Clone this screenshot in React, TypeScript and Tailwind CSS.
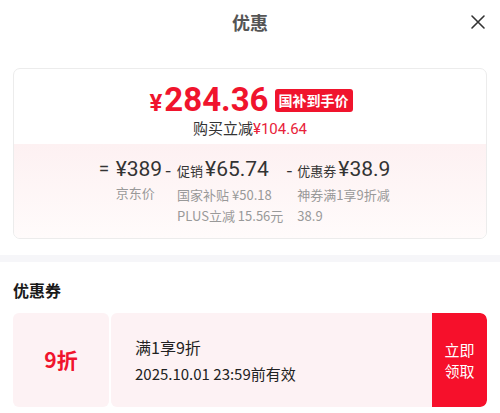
import React from "react";

const cjk = { fontFamily: '"Noto Sans CJK SC", "Noto Sans", sans-serif' };
const num = { fontFamily: 'Roboto, "Noto Sans CJK SC", sans-serif' };

export default function App() {
  return (
    <div className="w-[500px] h-[413px] bg-white overflow-hidden" style={cjk}>
      {/* header */}
      <div className="relative h-[44px] flex items-center justify-center">
        <span className="text-[18px] font-bold text-[#555555] leading-none">优惠</span>
        <svg className="absolute right-[14px] top-[14px]" width="16" height="16" viewBox="0 0 16 16">
          <path d="M2 2 L14 14 M14 2 L2 14" stroke="#333" strokeWidth="1.6" strokeLinecap="round" />
        </svg>
      </div>

      {/* price card */}
      <div className="mt-[24px] mx-[13px] border border-[#ececec] rounded-[7px] overflow-hidden h-[171px] flex flex-col">
        <div className="h-[75px] flex flex-col items-center pt-[13px]">
          <div className="flex items-center gap-[6px] h-[34px] ml-[2px]">
            <div className="flex items-baseline text-[#f0142d] font-bold leading-none" style={num}>
              <span className="text-[24px] mr-[2px]">¥</span>
              <span className="text-[33px]">284.36</span>
            </div>
            <span className="bg-[#f0142d] text-white text-[14px] font-bold rounded-[3px] px-[4px] h-[23px] leading-[23px] mt-[2px]">国补到手价</span>
          </div>
          <div className="mt-[2px] text-[15px] leading-[20px] text-[#333]">
            购买立减<span className="text-[#e8223a]" style={num}>¥104.64</span>
          </div>
        </div>
        <div className="flex-1 bg-gradient-to-b from-[#fdf1f2] to-[#fffbfb] flex justify-center pt-[12px] pr-[8px]">
          <div className="flex gap-[3px]">
            <div className="flex">
              <span className="w-[17px] text-[19px] leading-[26px] text-[#333]" style={num}>=</span>
              <div className="flex flex-col">
                <span className="text-[21px] leading-[26px] text-[#333]" style={num}>¥389</span>
                <span className="text-[13px] leading-[21px] text-[#999]">京东价</span>
              </div>
            </div>
            <div className="flex">
              <span className="w-[12px] text-[18px] leading-[26px] text-[#333]">-</span>
              <div className="flex flex-col">
                <span className="leading-[26px] text-[#333]">
                  <span className="text-[13px]">促销</span>
                  <span className="text-[21px] ml-[2px]" style={num}>¥65.74</span>
                </span>
                <span className="text-[13px] leading-[21px] text-[#999]">国家补贴 ¥50.18</span>
                <span className="text-[13px] leading-[21px] text-[#999]">PLUS立减 15.56元</span>
              </div>
            </div>
            <div className="flex">
              <span className="w-[11px] text-[18px] leading-[26px] text-[#333]">-</span>
              <div className="flex flex-col w-[96px]">
                <span className="leading-[26px] text-[#333] whitespace-nowrap">
                  <span className="text-[13px]">优惠券</span>
                  <span className="text-[21px] ml-[2px]" style={num}>¥38.9</span>
                </span>
                <span className="text-[13px] leading-[21px] text-[#999]">神券满1享9折减38.9</span>
              </div>
            </div>
          </div>
        </div>
      </div>

      {/* band */}
      <div className="mt-[16px] h-[7px] bg-[#f6f6f9]" />

      {/* coupons */}
      <div className="px-[13px]">
        <div className="pt-[17px] h-[51px] text-[16px] font-bold text-[#1a1a1a] leading-[22px]">优惠券</div>
        <div className="flex h-[94px] gap-[2px]">
          <div className="w-[96px] bg-[#fdf2f4] rounded-[6px] flex items-center justify-center">
            <span className="text-[#f0142d] text-[21px] font-bold">9折</span>
          </div>
          <div className="flex-1 flex rounded-[6px] overflow-hidden">
            <div className="flex-1 bg-[#fdf2f4] flex flex-col justify-center pl-[24px]">
              <span className="text-[16px] leading-[24px] text-[#222]">满1享9折</span>
              <span className="text-[15px] leading-[24px] text-[#222] mt-[3px]">2025.10.01 23:59前有效</span>
            </div>
            <div className="w-[55px] bg-[#f6102b] rounded-r-[7px] flex items-center justify-center">
              <span className="text-white text-[15px] leading-[21px] text-center">立即<br />领取</span>
            </div>
          </div>
        </div>
      </div>
    </div>
  );
}
